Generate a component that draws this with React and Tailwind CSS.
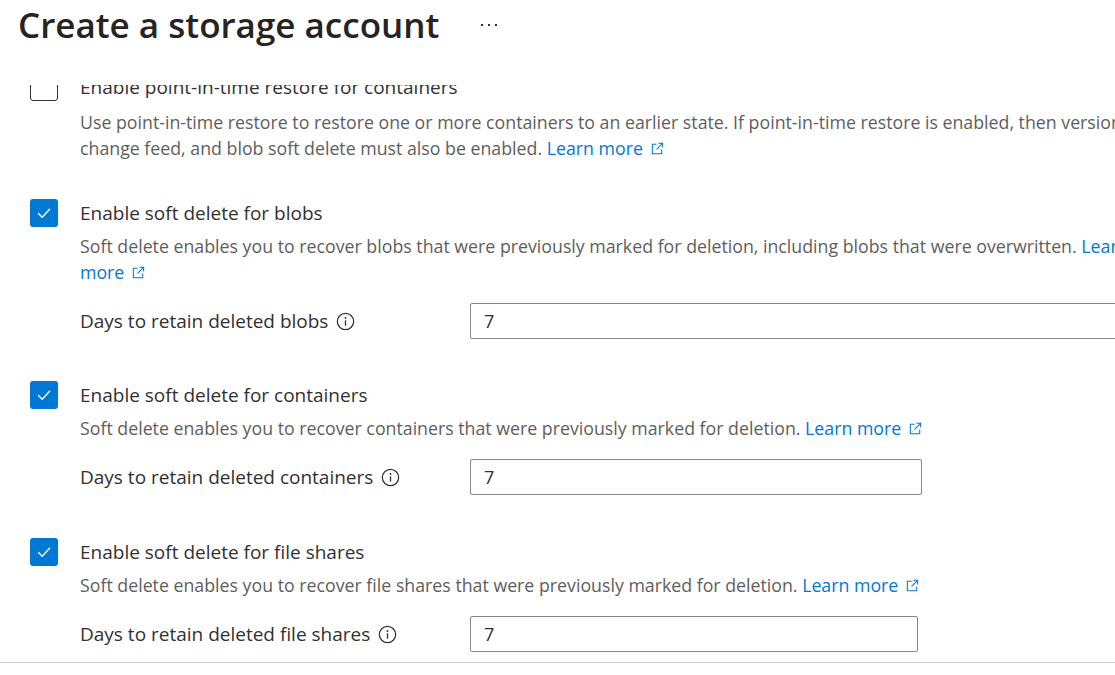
import { Fragment } from 'react'

const FONT = '"Open Sans", "Noto Sans", Arial, sans-serif'

function CheckBox({ checked }) {
  if (!checked) {
    return <div className="h-[28px] w-[28px] shrink-0 rounded-[3px] border border-[#323130] bg-white" />
  }
  return (
    <div className="flex h-[28px] w-[28px] shrink-0 items-center justify-center rounded-[3px] bg-[#0078d4]">
      <svg width="16" height="16" viewBox="0 0 16 16" fill="none">
        <path d="M2.5 8.6 L6.2 12.2 L13.6 4.2" stroke="white" strokeWidth="1.4" strokeLinecap="round" strokeLinejoin="round" />
      </svg>
    </div>
  )
}

function ExternalIcon() {
  return (
    <svg width="15" height="15" viewBox="0 0 16 16" fill="none" className="ml-[7px] inline-block align-[-1px]">
      <path d="M7 3.5 H2.5 V13.5 H12.5 V9" stroke="#0078d4" strokeWidth="1.1" />
      <path d="M9 2.5 H13.5 V7 M13.5 2.5 L7 9" stroke="#0078d4" strokeWidth="1.1" />
    </svg>
  )
}

function InfoIcon() {
  return (
    <svg width="19" height="19" viewBox="0 0 20 20" fill="none" className="ml-[8px] shrink-0">
      <circle cx="10" cy="10" r="8.6" stroke="#323130" strokeWidth="1.3" />
      <circle cx="10" cy="6.3" r="1" fill="#323130" />
      <path d="M10 8.8 V14.4" stroke="#323130" strokeWidth="1.4" />
    </svg>
  )
}

function LearnMore({ text = 'Learn more', icon = true }) {
  return (
    <span className="text-[#0078d4]">
      {text}
      {icon && <ExternalIcon />}
    </span>
  )
}

function Section({ checked, label, lines, days, inputWidth, className, descTop = 'mt-[6px]' }) {
  return (
    <div className={className}>
      <div className="flex h-[28px] items-center gap-[22px]">
        <CheckBox checked={checked} />
        <span className="text-[19px] leading-[28px] text-[#323130]">{label}</span>
      </div>
      <div className={`ml-[50px] whitespace-nowrap text-[17.75px] leading-[26px] text-[#605e5c] ${descTop}`}>
        {lines.map((line, i) => (
          <div key={i}>{line}</div>
        ))}
      </div>
      {days && (
        <div className="ml-[50px] mt-[18px] flex items-center">
          <div className="flex w-[390px] shrink-0 items-center text-[19px] text-[#323130]">
            <span>{days}</span>
            <InfoIcon />
          </div>
          <div
            className="flex h-[36px] shrink-0 items-center rounded-[2px] border border-[#8a8886] bg-white pl-[13px] text-[18px] text-[#323130]"
            style={{ width: inputWidth }}
          >
            7
          </div>
        </div>
      )}
    </div>
  )
}

export default function App() {
  return (
    <div className="h-[675px] w-[1115px] overflow-hidden bg-white" style={{ fontFamily: FONT }}>
      <div className="flex h-[85px] items-start pl-[18px]">
        <h1 className="text-[35px] font-semibold leading-[50px] text-[#252423]">Create a storage account</h1>
        <div className="ml-[42px] mt-[24px] flex gap-[5px]">
          <span className="h-[2px] w-[2px] bg-[#323130]" />
          <span className="h-[2px] w-[2px] bg-[#323130]" />
          <span className="h-[2px] w-[2px] bg-[#323130]" />
        </div>
      </div>
      <div className="h-[578px] overflow-hidden border-b border-[#d2d0ce]">
        <div className="-mt-[12px] pl-[30px]">
          <Section
            checked={false}
            descTop="mt-[8px]"
            label="Enable point-in-time restore for containers"
            lines={[
              'Use point-in-time restore to restore one or more containers to an earlier state. If point-in-time restore is enabled, then versioning,',
              <Fragment key="a">
                change feed, and blob soft delete must also be enabled. <LearnMore />
              </Fragment>,
            ]}
          />
          <Section
            className="mt-[38px]"
            checked
            label="Enable soft delete for blobs"
            lines={[
              <Fragment key="b">
                Soft delete enables you to recover blobs that were previously marked for deletion, including blobs that were overwritten.{' '}
                <LearnMore text="Learn" icon={false} />
              </Fragment>,
              <LearnMore key="c" text="more" />,
            ]}
            days="Days to retain deleted blobs"
            inputWidth={700}
          />
          <Section
            className="mt-[42px]"
            checked
            label="Enable soft delete for containers"
            lines={[
              <Fragment key="d">
                Soft delete enables you to recover containers that were previously marked for deletion. <LearnMore />
              </Fragment>,
            ]}
            days="Days to retain deleted containers"
            inputWidth={452}
          />
          <Section
            className="mt-[43px]"
            checked
            label="Enable soft delete for file shares"
            lines={[
              <Fragment key="e">
                Soft delete enables you to recover file shares that were previously marked for deletion. <LearnMore />
              </Fragment>,
            ]}
            days="Days to retain deleted file shares"
            inputWidth={448}
          />
        </div>
      </div>
    </div>
  )
}
